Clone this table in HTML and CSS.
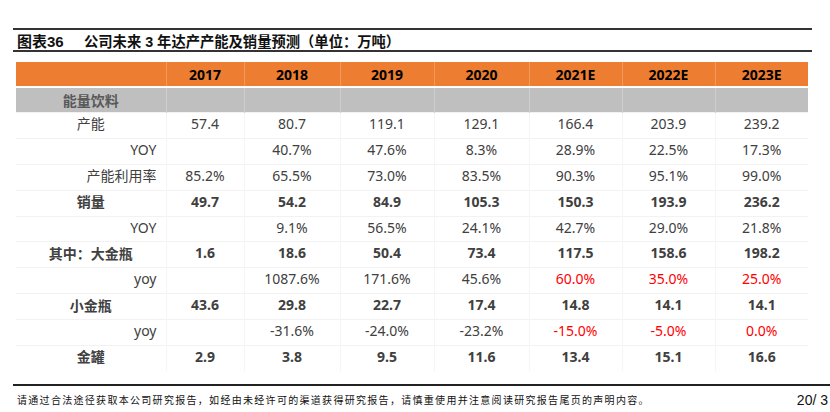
FILE: index.html
```html
<!DOCTYPE html>
<html lang="zh">
<head>
<meta charset="utf-8">
<link rel="stylesheet" href="styles.css">
</head>
<body>
<div class="page">
  <div class="title-bar">
    <span class="fig">图表36</span>
    <span class="caption">公司未来 3 年达产产能及销量预测（单位：万吨）</span>
  </div>
  <table class="data">
    <colgroup>
      <col class="c0"><col class="c1"><col class="c2"><col class="c3"><col class="c4"><col class="c5"><col class="c6"><col class="c7">
    </colgroup>
    <thead>
      <tr class="head">
        <th></th><th>2017</th><th>2018</th><th>2019</th><th>2020</th><th>2021E</th><th>2022E</th><th>2023E</th>
      </tr>
    </thead>
    <tbody>
      <tr class="section">
        <td class="lbl-c">能量饮料</td><td></td><td></td><td></td><td></td><td></td><td></td><td></td>
      </tr>
      <tr>
        <td class="lbl-c lbl-n">产能</td><td>57.4</td><td>80.7</td><td>119.1</td><td>129.1</td><td>166.4</td><td>203.9</td><td>239.2</td>
      </tr>
      <tr>
        <td class="lbl-r">YOY</td><td></td><td>40.7%</td><td>47.6%</td><td>8.3%</td><td>28.9%</td><td>22.5%</td><td>17.3%</td>
      </tr>
      <tr>
        <td class="lbl-r">产能利用率</td><td>85.2%</td><td>65.5%</td><td>73.0%</td><td>83.5%</td><td>90.3%</td><td>95.1%</td><td>99.0%</td>
      </tr>
      <tr class="bold">
        <td class="lbl-c">销量</td><td>49.7</td><td>54.2</td><td>84.9</td><td>105.3</td><td>150.3</td><td>193.9</td><td>236.2</td>
      </tr>
      <tr>
        <td class="lbl-r">YOY</td><td></td><td>9.1%</td><td>56.5%</td><td>24.1%</td><td>42.7%</td><td>29.0%</td><td>21.8%</td>
      </tr>
      <tr class="bold">
        <td class="lbl-c">其中：大金瓶</td><td>1.6</td><td>18.6</td><td>50.4</td><td>73.4</td><td>117.5</td><td>158.6</td><td>198.2</td>
      </tr>
      <tr>
        <td class="lbl-r">yoy</td><td></td><td>1087.6%</td><td>171.6%</td><td>45.6%</td><td class="red">60.0%</td><td class="red">35.0%</td><td class="red">25.0%</td>
      </tr>
      <tr class="bold">
        <td class="lbl-c">小金瓶</td><td>43.6</td><td>29.8</td><td>22.7</td><td>17.4</td><td>14.8</td><td>14.1</td><td>14.1</td>
      </tr>
      <tr>
        <td class="lbl-r">yoy</td><td></td><td>-31.6%</td><td>-24.0%</td><td>-23.2%</td><td class="red">-15.0%</td><td class="red">-5.0%</td><td class="red">0.0%</td>
      </tr>
      <tr class="bold">
        <td class="lbl-c">金罐</td><td>2.9</td><td>3.8</td><td>9.5</td><td>11.6</td><td>13.4</td><td>15.1</td><td>16.6</td>
      </tr>
    </tbody>
  </table>
  <div class="footer">
    <span class="notice">请通过合法途径获取本公司研究报告，如经由未经许可的渠道获得研究报告，请慎重使用并注意阅读研究报告尾页的声明内容。</span>
    <span class="pagenum">20/ 3</span>
  </div>
</div>
</body>
</html>
```
FILE: styles.css
```css
html, body {
  margin: 0;
  padding: 0;
  background: #fff;
}
body {
  width: 830px;
  height: 412px;
  overflow: hidden;
  font-family: "Noto Sans", "Noto Sans CJK SC", sans-serif;
}
.page {
  padding-top: 28px;
}
.title-bar {
  margin-left: 13px;
  width: 799px;
  height: 20px;
  border-top: 2px solid #333;
  border-bottom: 2px solid #333;
  display: flex;
  align-items: center;
  color: #111;
  font-weight: bold;
  white-space: nowrap;
}
.fig {
  font-family: "Liberation Sans", "Noto Sans CJK SC", sans-serif;
  font-size: 15px;
  margin-left: 4px;
  width: 67px;
}
.caption {
  font-family: "Liberation Sans", "Noto Sans CJK SC", sans-serif;
  font-size: 14.3px;
}
.data {
  margin-top: 10px;
  margin-left: 16px;
  width: 792px;
  table-layout: fixed;
  border-collapse: collapse;
  font-size: 14px;
  color: #404040;
}
.c0 { width: 150px; }
.c1 { width: 78px; }
.c2 { width: 96px; }
.c3 { width: 94px; }
.c4 { width: 95px; }
.c5 { width: 93px; }
.c6 { width: 93px; }
.c7 { width: 93px; }
.data th, .data td {
  padding: 0;
  text-align: center;
  white-space: nowrap;
}
.head th {
  background: #ed7d31;
  color: #000;
  font-weight: bold;
  height: 24px;
  border-left: 1px solid #f19a5c;
  border-bottom: 2px solid #fff;
}
.head th:first-child {
  border-left: none;
}
.section td {
  background: #bfbfbf;
  height: 24px;
  border-left: 1px solid #cdcdcd;
}
.section td:first-child {
  border-left: none;
  color: #595959;
  font-weight: bold;
}
.data tbody tr:not(.section) td {
  height: 20.9px;
  padding-bottom: 4px;
  border-left: 1px solid #f5f5f5;
  border-top: 1px solid #f2f2f2;
}
.data tbody tr:not(.section) td:first-child {
  border-left: none;
}
.bold td {
  font-weight: bold;
}
.lbl-r {
  text-align: right !important;
  padding-right: 9px !important;
}
.red {
  color: #ff0000;
}
.footer {
  margin-top: 13px;
  margin-left: 13px;
  border-top: 2px solid #222;
  display: flex;
  align-items: center;
  height: 26px;
  padding-top: 1px;
}
.notice {
  font-family: "Noto Sans CJK SC", sans-serif;
  font-size: 10px;
  letter-spacing: 1.3px;
  color: #111;
  margin-left: 4px;
}
.pagenum {
  margin-left: auto;
  font-family: "Liberation Sans", sans-serif;
  font-size: 14px;
  color: #111;
  margin-right: 2px;
}
```
